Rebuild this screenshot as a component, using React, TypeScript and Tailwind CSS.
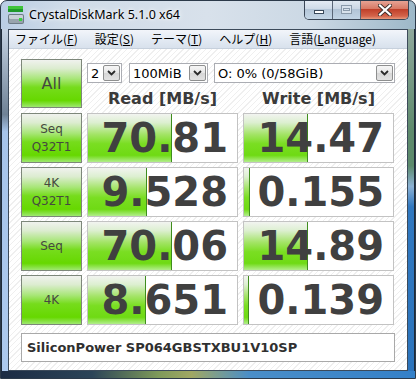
import React from 'react';

type Row = { label: string[]; read: string; write: string; readBar: number; writeBar: number };

const rows: Row[] = [
  { label: ['Seq', 'Q32T1'], read: '70.81', write: '14.47', readBar: 84, writeBar: 64 },
  { label: ['4K', 'Q32T1'], read: '9.528', write: '0.155', readBar: 59, writeBar: 6 },
  { label: ['Seq'], read: '70.06', write: '14.89', readBar: 84, writeBar: 64 },
  { label: ['4K'], read: '8.651', write: '0.139', readBar: 58, writeBar: 5 },
];

const menus = [
  { pre: 'ファイル(', key: 'F', post: ')' },
  { pre: '設定(', key: 'S', post: ')' },
  { pre: 'テーマ(', key: 'T', post: ')' },
  { pre: 'ヘルプ(', key: 'H', post: ')' },
  { pre: '言語(', key: 'L', post: 'anguage)' },
];

const Chevron = () => (
  <svg width="9" height="6" viewBox="0 0 9 6">
    <path d="M1 1 L4.5 4.5 L8 1" fill="none" stroke="#2a2a2a" strokeWidth="1.8" />
  </svg>
);

const Combo = ({ text, width }: { text: string; width: string }) => (
  <div className={`${width} h-[20px] flex items-center border border-[#abadb3] bg-white`}>
    <span className="flex-1 pl-[3px] text-[13px] leading-none text-black font-['DejaVu_Sans',sans-serif]">{text}</span>
    <div className="w-[17px] h-[16px] mr-[1px] flex items-center justify-center border border-[#8e8f8f] rounded-[2px] bg-[linear-gradient(180deg,#f6f6f6_0%,#e6e6e6_50%,#d6d6d6_51%,#e2e2e2_100%)]">
      <Chevron />
    </div>
  </div>
);

const GreenButton = ({ lines, big }: { lines: string[]; big?: boolean }) => (
  <div className="w-[61px] h-full flex flex-col items-center justify-center border border-[#7d877a] bg-[linear-gradient(180deg,#f0f2ee_0%,#dcecd0_18%,#a8e678_40%,#76dc1c_58%,#66d800_86%,#9ee870_100%)] text-[#45493f] font-['DejaVu_Sans',sans-serif]">
    {lines.map((l) => (
      <span key={l} className={big ? 'text-[16px] leading-none' : 'text-[12px] leading-[18px]'}>
        {l}
      </span>
    ))}
  </div>
);

const ValueBox = ({ value, bar }: { value: string; bar: number }) => (
  <div className="relative w-[151px] h-full border border-[#c3c3c3] bg-white flex items-center justify-end pr-[9px]">
    <div
      className="absolute left-0 top-0 bottom-0 border-r border-[#3f8d1d] bg-[linear-gradient(180deg,#f2f4f0_0%,#dcefd0_18%,#a4e468_42%,#7ade22_62%,#6fda14_86%,#b2ee8c_100%)]"
      style={{ width: `${bar}px` }}
    />
    <span className="relative text-[40px] leading-none font-bold text-[#404040] font-['DejaVu_Sans',sans-serif]">{value}</span>
  </div>
);

const AppIcon = () => (
  <svg width="18" height="20" viewBox="0 0 18 20">
    <rect x="1" y="1" width="15" height="3" fill="#3fc43a" />
    <rect x="1" y="4" width="15" height="3" fill="#1f9a2a" />
    <rect x="1" y="9" width="16" height="10" rx="2" fill="#6d7b86" />
    <rect x="2" y="10" width="14" height="4" rx="1" fill="#c9d1d6" />
    <rect x="2" y="14" width="14" height="4" rx="1" fill="#98a4ad" />
    <rect x="12" y="13" width="3" height="3" fill="#38d040" />
  </svg>
);

export default function App() {
  return (
    <div className="w-[416px] h-[379px] flex flex-col overflow-hidden rounded-t-[7px] border border-[#2c3a4a] bg-[linear-gradient(90deg,#b9cde4_0%,#cfdbe8_15%,#d8e1eb_50%,#cbd8e4_75%,#9db8c8_100%)]">
      {/* title bar */}
      <div className="relative h-[28px] shrink-0 flex items-center pl-[6px]">
        <AppIcon />
        <span className="ml-[4px] mt-[1px] text-[12.5px] text-black font-['Noto_Sans',sans-serif] [text-shadow:0_0_6px_#ffffff,0_0_3px_#ffffff]">
          CrystalDiskMark 5.1.0 x64
        </span>
        <div className="absolute top-[-1px] right-[6px] flex h-[20px] rounded-b-[5px] border border-t-0 border-[#3a4656] overflow-hidden">
          <div className="w-[28px] flex items-center justify-center border-r border-[#5a6676] bg-[linear-gradient(180deg,#e6edf5_0%,#cfdbe8_45%,#b4c6d8_50%,#c4d6e6_100%)]">
            <div className="mt-[5px] w-[10px] h-[4px] bg-white border border-[#3a4a5c]" />
          </div>
          <div className="w-[28px] flex items-center justify-center border-r border-[#5a6676] bg-[linear-gradient(180deg,#e2eaf2_0%,#cbd7e4_45%,#b2c4d6_50%,#c2d4e4_100%)]">
            <div className="w-[11px] h-[9px] border border-[#8a9aaa] bg-[#d8e2ec] flex items-center justify-center">
              <div className="w-[7px] h-[3px] border border-[#8a9aaa]" />
            </div>
          </div>
          <div className="w-[47px] flex items-center justify-center bg-[linear-gradient(180deg,#e8a89a_0%,#d87a66_45%,#c0402a_50%,#d4644a_85%,#e89a7c_100%)]">
            <svg width="14" height="12" viewBox="0 0 14 12">
              <path d="M2 1.5 L12 10.5 M12 1.5 L2 10.5" stroke="#40302c" strokeWidth="4" strokeLinecap="square" />
              <path d="M2 1.5 L12 10.5 M12 1.5 L2 10.5" stroke="#ffffff" strokeWidth="2.2" strokeLinecap="square" />
            </svg>
          </div>
        </div>
      </div>

      {/* middle: side frames + client */}
      <div className="flex flex-1 min-h-0">
        <div className="w-[7px] shrink-0 bg-[linear-gradient(180deg,#c4d2e2_0%,#6f8296_25%,#a6c4ea_30%,#acc9ee_100%)] border-l border-[#1e2a38]" />
        <div className="w-[400px] flex flex-col border border-[#3c4a5a]">
          {/* menu */}
          <div className="h-[19px] shrink-0 flex items-center gap-[17px] pl-[6px] border-b border-[#c6d0dc] bg-[linear-gradient(180deg,#f2f5fa_0%,#e4ebf4_50%,#d8e1ec_100%)] text-[12px] leading-none text-black font-['Noto_Sans_CJK_JP',sans-serif]">
            {menus.map((m) => (
              <span key={m.key}>
                {m.pre}
                <span className="underline">{m.key}</span>
                {m.post}
              </span>
            ))}
          </div>

          {/* content */}
          <div className="flex-1 flex flex-col pl-[12px] pt-[10px] bg-[repeating-linear-gradient(135deg,#ffffff_0px,#ffffff_3px,#efefef_3px,#efefef_4px)]">
            <div className="flex gap-[5px] h-[49px]">
              <GreenButton lines={['All']} big />
              <div className="flex flex-col">
                <div className="flex mt-[4px] gap-[7px]">
                  <Combo text="2" width="w-[35px]" />
                  <div className="flex gap-[6px]">
                    <Combo text="100MiB" width="w-[79px]" />
                    <Combo text="O: 0% (0/58GiB)" width="w-[181px]" />
                  </div>
                </div>
                <div className="flex gap-[5px] mt-[8px] text-[16px] leading-none font-bold text-[#3a3a3a] font-['DejaVu_Sans',sans-serif]">
                  <span className="w-[151px] text-center">Read [MB/s]</span>
                  <span className="w-[151px] text-center">Write [MB/s]</span>
                </div>
              </div>
            </div>

            <div className="flex flex-col gap-[4px] mt-[5px]">
              {rows.map((r) => (
                <div key={r.read} className="flex gap-[5px] h-[50px]">
                  <GreenButton lines={r.label} />
                  <ValueBox value={r.read} bar={r.readBar} />
                  <ValueBox value={r.write} bar={r.writeBar} />
                </div>
              ))}
            </div>

            <div className="mt-[8px] w-[374px] h-[29px] flex items-center pl-[5px] border border-[#a9a9a9] bg-white text-[13px] font-bold text-[#303030] font-['DejaVu_Sans',sans-serif]">
              SiliconPower SP064GBSTXBU1V10SP
            </div>
          </div>
        </div>
        <div className="w-[7px] shrink-0 bg-[linear-gradient(180deg,#8fa89c_0%,#5e8a6c_30%,#5c8a6c_40%,#8cb2d4_46%,#3078c0_52%,#2c74bc_100%)] border-r border-[#1e2a38]" />
      </div>

      {/* bottom frame */}
      <div className="h-[7px] shrink-0 bg-[linear-gradient(90deg,#1c2c44_0%,#2c4458_22%,#7e9a5a_38%,#a0a864_46%,#4a8ec8_60%,#3480c8_100%)]" />
    </div>
  );
}
